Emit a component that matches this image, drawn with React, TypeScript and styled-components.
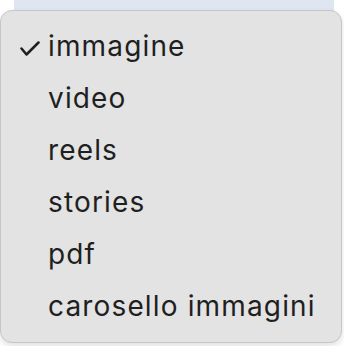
import React from "react";
import styled, { createGlobalStyle } from "styled-components";

const Global = createGlobalStyle`
  html, body { margin: 0; padding: 0; background: #ffffff; }
  body { font-family: Inter, "Liberation Sans", sans-serif; }
`;

const Page = styled.div`
  width: 344px;
  height: 346px;
  position: relative;
  overflow: hidden;
  background: #ffffff;
`;

const Field = styled.div`
  margin: 0 10px 0 14px;
  height: 12px;
  background: #dfe6f1;
`;

const Menu = styled.ul`
  position: absolute;
  top: 10px;
  left: 0;
  width: 342px;
  margin: 0;
  padding: 9px 0 10px;
  list-style: none;
  background: #e3e3e3;
  border: 1px solid #c6c6c6;
  border-radius: 12px;
  box-shadow: 0 3px 6px rgba(0, 0, 0, 0.12);
  box-sizing: border-box;
`;

const Item = styled.li`
  height: 52px;
  display: flex;
  align-items: center;
  padding-left: 47px;
  position: relative;
  font-size: 28px;
  color: #1f1f1f;
  letter-spacing: 1.15px;
`;

const Check = styled.span`
  position: absolute;
  left: 19px;
  top: 21px;
  display: flex;
`;

const items = ["immagine", "video", "reels", "stories", "pdf", "carosello immagini"];

export default function App() {
  return (
    <Page>
      <Global />
      <Field />
      <Menu>
        {items.map((t, i) => (
          <Item key={t}>
            {i === 0 && (
              <Check>
                <svg width="20" height="15" viewBox="0 0 20 15">
                  <path d="M1.5 7.5 L6.5 13.5 L18.5 1.5" fill="none" stroke="#1f1f1f" strokeWidth="2.5" strokeLinecap="round" strokeLinejoin="round" />
                </svg>
              </Check>
            )}
            {t}
          </Item>
        ))}
      </Menu>
    </Page>
  );
}
